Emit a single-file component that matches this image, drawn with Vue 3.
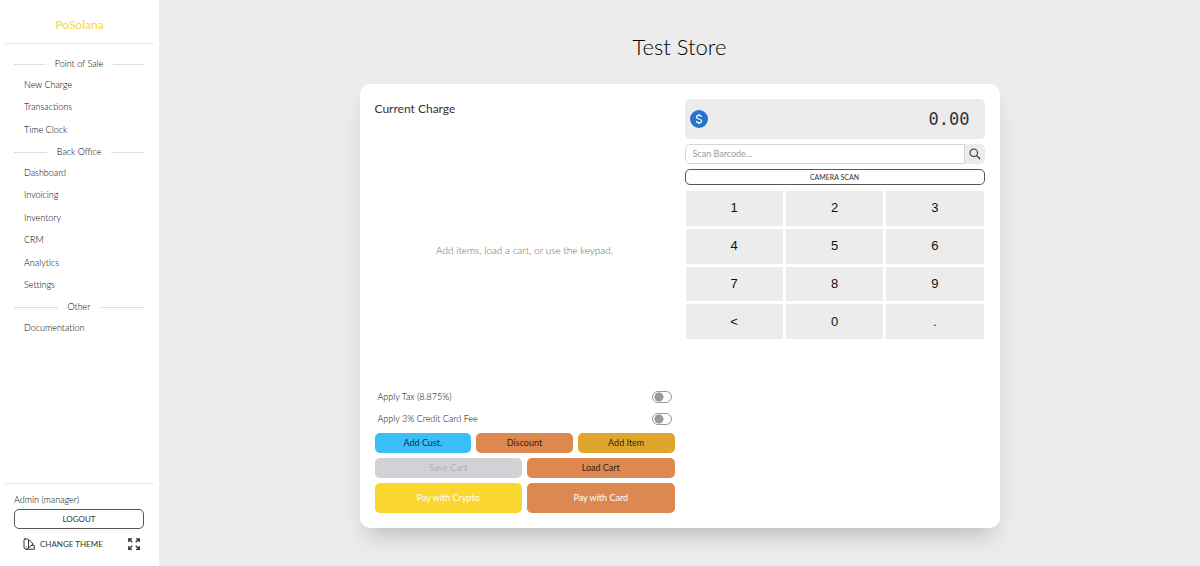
<script setup>
import { ref } from 'vue'

const sections = [
  { title: 'Point of Sale', items: ['New Charge', 'Transactions', 'Time Clock'] },
  { title: 'Back Office', items: ['Dashboard', 'Invoicing', 'Inventory', 'CRM', 'Analytics', 'Settings'] },
  { title: 'Other', items: ['Documentation'] }
]
const keys = ['1', '2', '3', '4', '5', '6', '7', '8', '9', '<', '0', '.']
const tax = ref(false)
const fee = ref(false)
const barcode = ref('')
</script>

<template>
  <div class="app">
    <aside class="sidebar">
      <a href="#" class="brand">PoSolana</a>
      <nav class="nav">
        <template v-for="s in sections" :key="s.title">
          <h2 class="divider">{{ s.title }}</h2>
          <ul class="links">
            <li v-for="i in s.items" :key="i"><a href="#">{{ i }}</a></li>
          </ul>
        </template>
      </nav>
      <div class="account">
        <div class="user">Admin (manager)</div>
        <button type="button" class="logout">LOGOUT</button>
        <div class="tools">
          <button type="button" class="theme">
            <svg width="12" height="12" viewBox="0 0 24 24" fill="none" stroke="currentColor" stroke-width="2" stroke-linejoin="round" stroke-linecap="round">
              <path d="M4 2h5a2 2 0 0 1 2 2v14a4 4 0 0 1-4.500 4.500A4.500 4.500 0 0 1 2 18V4a2 2 0 0 1 2-2z" />
              <path d="M11 6.500l2.500-2 6.500 7.500L10.500 20.500" />
              <path d="M17.500 14.500H22.500V22.500H6.500" />
              <path d="M6.500 18h.01" />
            </svg>
            CHANGE THEME
          </button>
          <button type="button" class="expand" aria-label="Full screen">
            <svg width="12" height="12" viewBox="0 0 24 24" fill="none" stroke="currentColor" stroke-width="2.500">
              <path d="M1.500 8V1.500H8M1.500 1.500l7 7M16 1.500h6.500V8M22.500 1.500l-7 7M1.500 16v6.500H8M1.500 22.500l7-7M16 22.500h6.500V16M22.500 22.500l-7-7" />
            </svg>
          </button>
        </div>
      </div>
    </aside>

    <main class="main">
      <h1>Test Store</h1>
      <div class="card">
        <section class="charge">
          <h2>Current Charge</h2>
          <p class="empty">Add items, load a cart, or use the keypad.</p>
          <label class="option">Apply Tax (8.875%)<input v-model="tax" type="checkbox" role="switch" /></label>
          <label class="option">Apply 3% Credit Card Fee<input v-model="fee" type="checkbox" role="switch" /></label>
          <div class="actions">
            <div class="row">
              <button type="button" class="btn blue">Add Cust.</button>
              <button type="button" class="btn orange">Discount</button>
              <button type="button" class="btn gold">Add Item</button>
            </div>
            <div class="row">
              <button type="button" class="btn" disabled>Save Cart</button>
              <button type="button" class="btn orange">Load Cart</button>
            </div>
            <div class="row">
              <button type="button" class="btn pay yellow">Pay with Crypto</button>
              <button type="button" class="btn pay orange">Pay with Card</button>
            </div>
          </div>
        </section>

        <section class="entry">
          <div class="display">
            <svg width="18" height="18" viewBox="0 0 32 32" aria-label="USD">
              <circle cx="16" cy="16" r="16" fill="#2775ca" />
              <path d="M20.500 12.500c-.3-2-2-3-4.500-3s-4.300 1.200-4.300 3.200c0 4.400 8.800 2.200 8.800 6.700 0 2-1.800 3.200-4.500 3.200s-4.400-1.200-4.600-3.300M16 6.500v3M16 22.500v3" fill="none" stroke="#fff" stroke-width="2.200" />
            </svg>
            <output>0.00</output>
          </div>
          <div class="search">
            <input v-model="barcode" type="text" placeholder="Scan Barcode..." aria-label="Scan Barcode" />
            <button type="button" aria-label="Search">
              <svg width="12" height="12" viewBox="0 0 24 24" fill="none" stroke="currentColor" stroke-width="2.200">
                <circle cx="9.500" cy="9.500" r="7.500" />
                <path d="M15 15l7.500 7.500" />
              </svg>
            </button>
          </div>
          <button type="button" class="camera">CAMERA SCAN</button>
          <div class="keypad">
            <button v-for="k in keys" :key="k" type="button">{{ k }}</button>
          </div>
        </section>
      </div>
    </main>
  </div>
</template>

<style>
body {
  margin: 0;
}
</style>

<style scoped>
* {
  box-sizing: border-box;
}
.app {
  display: flex;
  min-height: 100vh;
  background: #ececec;
  color: #333;
  font: 400 9px/12px Lato, "Liberation Sans", sans-serif;
}
button,
input {
  font: inherit;
  color: inherit;
  margin: 0;
  padding: 0;
}
button {
  border: 0;
  background: none;
  cursor: pointer;
}
a {
  color: inherit;
  text-decoration: none;
}
h1,
h2,
p,
ul {
  margin: 0;
  padding: 0;
  font-weight: inherit;
  list-style: none;
}
svg {
  display: block;
  flex: none;
}
.sidebar {
  flex: 0 0 159px;
  display: flex;
  flex-direction: column;
  padding: 5px;
  background: #fff;
}
.brand {
  height: 39px;
  border-bottom: 1px solid #e5e5e5;
  color: #f5d63a;
  font-size: 12px;
  line-height: 39px;
  text-align: center;
}
.nav {
  flex: 1;
  padding: 10px 10px 10px 9px;
  color: #000;
  font-weight: 300;
}
.divider {
  display: flex;
  align-items: center;
  gap: 10px;
  height: 20px;
  font-size: 9px;
}
.divider::before,
.divider::after {
  content: "";
  flex: 1;
  height: 1px;
  background: #dedede;
}
.links li {
  height: 22px;
  padding-left: 10px;
  line-height: 22px;
}
.links li:nth-child(even),
.links li:last-child {
  height: 23px;
}
.account {
  padding: 10px 10px 7px 9px;
  border-top: 1px solid #e8e8e8;
}
.user {
  color: #000;
  font-weight: 300;
}
.logout {
  display: block;
  width: 100%;
  height: 20px;
  margin-top: 3px;
  border: 1px solid #555;
  border-radius: 5px;
}
.logout,
.theme {
  font-size: 8px;
}
.tools {
  display: flex;
  align-items: center;
  justify-content: space-between;
  height: 20px;
  margin-top: 5px;
  padding: 0 4px 0 9px;
}
.theme {
  display: flex;
  align-items: center;
  gap: 5px;
}
.main {
  flex: 1;
  display: flex;
  flex-direction: column;
  align-items: center;
  padding: 32px 20px;
}
h1 {
  color: #000;
  font-size: 22px;
  font-weight: 300;
  line-height: 30px;
}
.card {
  display: grid;
  grid-template-columns: 1fr 1fr;
  gap: 10px;
  width: 100%;
  max-width: 640px;
  margin-top: 22px;
  padding: 15px;
  border-radius: 10px;
  background: #fff;
  box-shadow: 0 14px 24px -8px rgba(0, 0, 0, 0.22);
}
.charge {
  display: flex;
  flex-direction: column;
}
.charge h2 {
  font-size: 12px;
  line-height: 20px;
}
.empty {
  display: flex;
  align-items: center;
  justify-content: center;
  min-height: 267px;
  padding-bottom: 5px;
  color: #666;
  font-size: 10px;
  font-weight: 300;
}
.option {
  display: flex;
  align-items: center;
  justify-content: space-between;
  height: 22px;
  padding: 0 3px;
  color: #000;
  font-weight: 300;
}
.option input {
  appearance: none;
  width: 20px;
  height: 12px;
  border: 1px solid #999;
  border-radius: 6px;
  background: radial-gradient(circle at 6px 5px, #999 4px, transparent 5px);
}
.option input:checked {
  background: radial-gradient(circle at 12px 5px, #333 4px, transparent 5px);
}
.actions {
  display: grid;
  gap: 5px;
  margin-top: 3px;
}
.row {
  display: flex;
  gap: 5px;
}
.btn {
  flex: 1 1 0;
  height: 20px;
  border-radius: 5px;
  color: #3a1c0a;
}
.btn:disabled {
  background: #d1d1d6;
  color: #b2b2b7;
}
.blue {
  background: #3abff8;
  color: #03303f;
}
.orange {
  background: #dc8850;
}
.gold {
  background: #dfa62e;
}
.yellow {
  background: #f9d72f;
}
.btn.pay {
  height: 30px;
  color: #fff;
}
.display {
  display: flex;
  align-items: center;
  justify-content: space-between;
  height: 40px;
  padding: 0 15px 0 5px;
  border-radius: 5px;
  background: #ececec;
}
.display output {
  font: 17px/24px "DejaVu Sans Mono", monospace;
}
.search {
  display: flex;
  height: 20px;
  margin-top: 5px;
}
.search input {
  flex: 1;
  min-width: 0;
  padding: 0 7px;
  border: 1px solid #d6d6d6;
  border-radius: 5px 0 0 5px;
  background: #fff;
}
.search input::placeholder {
  color: #999;
  opacity: 1;
}
.search button {
  display: flex;
  align-items: center;
  justify-content: center;
  width: 20px;
  border-radius: 0 5px 5px 0;
  background: #ececec;
}
.camera {
  display: block;
  width: 100%;
  height: 16px;
  margin-top: 5px;
  border: 1px solid #555;
  border-radius: 5px;
  font-size: 7px;
  line-height: 14px;
}
.keypad {
  display: grid;
  grid-template-columns: repeat(3, 1fr);
  grid-auto-rows: 1fr;
  gap: 3px;
  height: 148px;
  margin: 6px 1px 0;
}
.keypad button {
  background: #ececec;
  color: #111;
  font: 13px/16px "Liberation Sans", sans-serif;
}
</style>
